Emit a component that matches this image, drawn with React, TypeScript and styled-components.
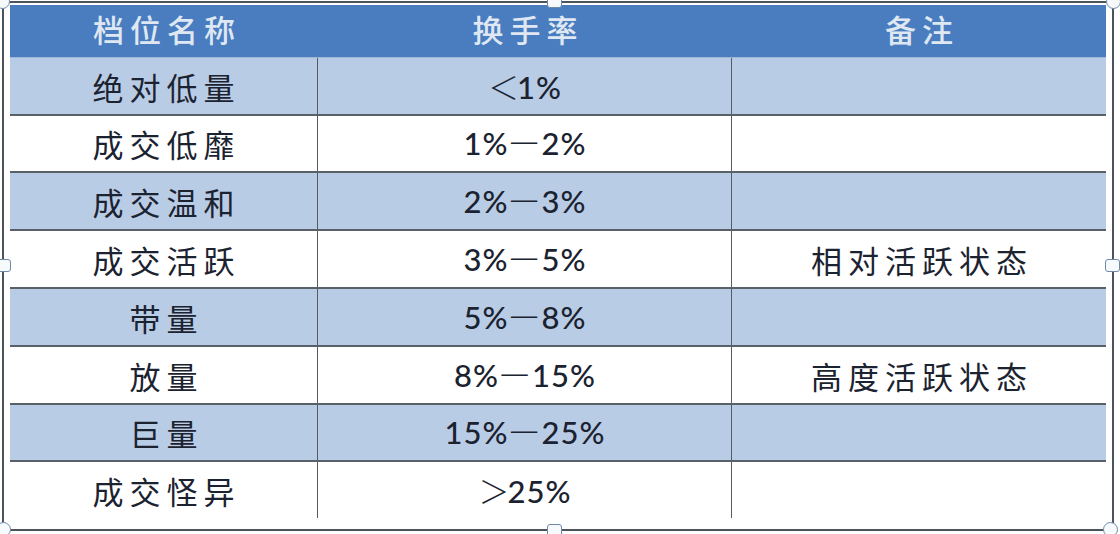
import React from "react";
import styled, { createGlobalStyle } from "styled-components";

const Global = createGlobalStyle`
  html, body { margin: 0; padding: 0; background: #ffffff; }
  body { width: 1120px; height: 534px; overflow: hidden; }
`;

const Frame = styled.div`
  position: relative;
  box-sizing: border-box;
  margin: 1px 0 0 2px;
  width: 1112px;
  height: 530px;
  border: 2px solid #4d535b;
  padding: 2px 6px 0 6px;
  background: #ffffff;
`;

const Table = styled.div`
  display: flex;
  flex-direction: column;
  width: 1096px;
`;

const Row = styled.div<{ $tone: "head" | "blue" | "white"; $first?: boolean; $h: number }>`
  display: grid;
  grid-template-columns: 308px 414px 374px;
  height: ${(p) => p.$h}px;
  box-sizing: border-box;
  background: ${(p) =>
    p.$tone === "head" ? "#4a7dc0" : p.$tone === "blue" ? "#b9cce6" : "#ffffff"};
  border-top: ${(p) =>
    p.$tone === "head" ? "none" : p.$first ? "1px solid #9fb6d6" : "2px solid #5a6068"};
`;

const Cell = styled.div<{ $divider?: boolean; $head?: boolean; $num?: boolean }>`
  display: flex;
  align-items: center;
  justify-content: center;
  box-sizing: border-box;
  border-right: ${(p) => (p.$divider ? "1.5px solid #555b63" : "none")};
  padding-bottom: ${(p) => (p.$head ? 6 : 0)}px;
  color: ${(p) => (p.$head ? "#dfe8f2" : "#1b2230")};
  font-family: ${(p) =>
    p.$num
      ? '"Lato", "Open Sans", "Noto Sans CJK SC", sans-serif'
      : '"Noto Sans CJK SC", "Noto Sans", sans-serif'};
  font-size: ${(p) => (p.$num ? 31 : 31)}px;
  font-weight: ${(p) => (p.$num ? 500 : p.$head ? 500 : 400)};
  letter-spacing: ${(p) => (p.$num ? 1 : 6)}px;
  white-space: nowrap;
`;

const Text = styled.span<{ $spaced?: boolean }>`
  margin-right: ${(p) => (p.$spaced ? -6 : -1)}px;
  line-height: 1;
`;

const Dash = styled.span`
  font-family: "Noto Sans CJK SC", sans-serif;
  font-weight: 300;
  font-size: 29px;
  margin: 0 2px 0 1px;
`;

const Angle = styled.span`
  font-family: "Noto Sans CJK SC", sans-serif;
  font-weight: 300;
  font-size: 31px;
  margin-right: -3px;
`;

const Handle = styled.div<{ $round?: boolean }>`
  position: absolute;
  box-sizing: border-box;
  width: 15px;
  height: ${(p) => (p.$round ? 15 : 13)}px;
  border-radius: ${(p) => (p.$round ? "50%" : "3px")};
  border: 1.5px solid #6f8aa9;
  background: #f7fafd;
`;

type R = { name: string; rate: React.ReactNode; note: string };

const rows: R[] = [
  { name: "绝对低量", rate: <><Angle>＜</Angle>1%</>, note: "" },
  { name: "成交低靡", rate: <>1%<Dash>一</Dash>2%</>, note: "" },
  { name: "成交温和", rate: <>2%<Dash>一</Dash>3%</>, note: "" },
  { name: "成交活跃", rate: <>3%<Dash>一</Dash>5%</>, note: "相对活跃状态" },
  { name: "带量", rate: <>5%<Dash>一</Dash>8%</>, note: "" },
  { name: "放量", rate: <>8%<Dash>一</Dash>15%</>, note: "高度活跃状态" },
  { name: "巨量", rate: <>15%<Dash>一</Dash>25%</>, note: "" },
  { name: "成交怪异", rate: <><Angle>＞</Angle>25%</>, note: "" },
];

const heights = [57, 57, 58, 58, 58, 58, 57, 58];

export default function App() {
  return (
    <>
      <Global />
      <Frame>
        <Table>
          <Row $tone="head" $h={52}>
            <Cell $head><Text $spaced>档位名称</Text></Cell>
            <Cell $head><Text $spaced>换手率</Text></Cell>
            <Cell $head><Text $spaced>备注</Text></Cell>
          </Row>
          {rows.map((r, i) => (
            <Row key={r.name} $tone={i % 2 === 0 ? "blue" : "white"} $first={i === 0} $h={heights[i]}>
              <Cell $divider><Text $spaced>{r.name}</Text></Cell>
              <Cell $divider $num><Text>{r.rate}</Text></Cell>
              <Cell><Text $spaced>{r.note}</Text></Cell>
            </Row>
          ))}
        </Table>
        <Handle $round style={{ left: -9, top: -9 }} />
        <Handle $round style={{ right: -9, top: -9 }} />
        <Handle $round style={{ left: -8, bottom: -8 }} />
        <Handle $round style={{ right: -6, bottom: -8 }} />
        <Handle style={{ left: 543, top: -8 }} />
        <Handle style={{ left: 543, bottom: -8 }} />
        <Handle style={{ left: -8, top: 256 }} />
        <Handle style={{ right: -8, top: 256 }} />
      </Frame>
    </>
  );
}
